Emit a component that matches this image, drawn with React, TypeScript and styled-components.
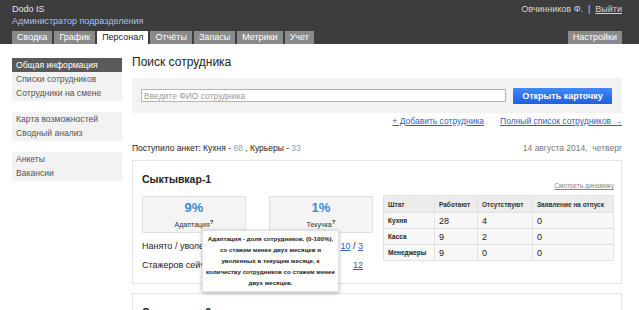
import React from "react";
import styled, { createGlobalStyle } from "styled-components";

const GlobalStyle = createGlobalStyle`
  html, body { margin: 0; padding: 0; background: #fff; }
  body {
    font-family: "Liberation Sans", Arial, Helvetica, sans-serif;
    color: #222;
    overflow: hidden;
    width: 639px;
    height: 310px;
  }
  * { box-sizing: border-box; }
`;

const Header = styled.header`
  background: #3d3d3d;
  height: 44px;
  padding: 3px 17px 0 12px;
  display: flex;
  flex-direction: column;
`;
const TopRow = styled.div`
  display: flex;
  justify-content: space-between;
  align-items: flex-start;
`;
const Brand = styled.div`
  font-size: 9px;
  line-height: 12px;
  color: #e2e2e2;
`;
const Role = styled.div`
  font-size: 9px;
  line-height: 12px;
  color: #a8c3ef;
`;
const User = styled.div`
  font-size: 9px;
  line-height: 12px;
  color: #d4d4d4;
`;
const Logout = styled.a`
  color: #d4d4d4;
  text-decoration: underline;
`;
const Sep = styled.span`
  margin: 0 5px;
`;
const TabsRow = styled.nav`
  display: flex;
  gap: 2px;
  margin-top: auto;
`;
const Tab = styled.div<{ $active?: boolean; $push?: boolean }>`
  height: 13px;
  line-height: 13px;
  padding: 0 5px;
  font-size: 9px;
  background: ${(p) => (p.$active ? "#fff" : "#8a8a8a")};
  color: ${(p) => (p.$active ? "#222" : "#fff")};
  margin-left: ${(p) => (p.$push ? "auto" : "0")};
`;

const Page = styled.div`
  display: flex;
  gap: 10px;
  padding: 14px 17px 0 12px;
`;
const Sidebar = styled.aside`
  width: 110px;
  flex: none;
  display: flex;
  flex-direction: column;
  gap: 11px;
`;
const NavGroup = styled.div`
  background: #f2f2f2;
  padding-bottom: 1px;
`;
const NavItem = styled.div<{ $active?: boolean }>`
  font-size: 8.6px;
  line-height: 14px;
  padding-left: 4px;
  color: ${(p) => (p.$active ? "#fff" : "#555")};
  background: ${(p) => (p.$active ? "#5a5a5a" : "transparent")};
`;

const Main = styled.main`
  flex: 1;
  min-width: 0;
`;
const Title = styled.h1`
  margin: -3px 0 8px;
  font-size: 12px;
  line-height: 15px;
  font-weight: normal;
  color: #222;
`;
const SearchBox = styled.div`
  height: 35px;
  background: #f2f2f2;
  display: flex;
  align-items: center;
  gap: 7px;
  padding: 0 10px 0 9px;
`;
const SearchInput = styled.input`
  flex: 1;
  height: 13px;
  border: 1px solid #b5b5b5;
  background: #fff;
  font-family: inherit;
  font-size: 8.5px;
  padding: 0 2px;
  outline: none;
  &::placeholder { color: #9a9a9a; }
`;
const OpenButton = styled.button`
  width: 99px;
  height: 16px;
  border: none;
  border-radius: 1px;
  background: linear-gradient(#4289f6, #1e5fe0);
  color: #fff;
  font-family: inherit;
  font-weight: bold;
  font-size: 9px;
  padding: 0;
`;
const LinksRow = styled.div`
  display: flex;
  justify-content: flex-end;
  gap: 16px;
  margin-top: 2px;
  font-size: 8.5px;
  line-height: 12px;
`;
const Link = styled.a`
  color: #2d63c4;
  text-decoration: underline;
`;
const InfoRow = styled.div`
  display: flex;
  justify-content: space-between;
  margin-top: 15px;
  font-size: 8.5px;
  line-height: 12px;
  color: #222;
`;
const Count = styled.span`
  color: #8fa0b6;
`;
const DateText = styled.span`
  color: #777;
`;

const Card = styled.section<{ $first?: boolean }>`
  margin-top: ${(p) => (p.$first ? "6px" : "9px")};
  border: 1px solid #e4e4e4;
  padding: 12px 8px 8px 9px;
`;
const CardGrid = styled.div`
  display: grid;
  grid-template-columns: 231px 1fr;
  gap: 10px;
`;
const CardTitle = styled.h2`
  margin: 0 0 10px;
  font-size: 10.5px;
  line-height: 13px;
  font-weight: bold;
  color: #222;
`;
const StatRow = styled.div`
  display: grid;
  grid-template-columns: 1fr 1fr;
  gap: 23px;
`;
const StatBox = styled.div`
  position: relative;
  height: 37px;
  background: #f4f4f4;
  border: 1px solid #e0e0e0;
  text-align: center;
  padding-top: 4px;
`;
const StatValue = styled.div`
  font-size: 13px;
  line-height: 14px;
  font-weight: bold;
  color: #3a8ad6;
`;
const StatLabel = styled.div`
  font-size: 7px;
  line-height: 10px;
  margin-top: 2px;
  color: #333;
`;
const Q = styled.sup`
  font-size: 6px;
  font-weight: bold;
  color: #222;
  vertical-align: 3px;
`;
const InfoLine = styled.div<{ $first?: boolean }>`
  display: flex;
  justify-content: space-between;
  padding-right: 10px;
  margin-top: ${(p) => (p.$first ? "4px" : "0")};
  font-size: 9px;
  line-height: 19px;
  color: #222;
`;
const ValueLink = styled.a`
  color: #2d63c4;
  text-decoration: underline;
`;
const Tooltip = styled.div`
  position: absolute;
  left: 59px;
  top: 33px;
  width: 137px;
  z-index: 5;
  background: #fff;
  border: 1px solid #e2e2e2;
  box-shadow: 0 1px 4px rgba(0, 0, 0, 0.3);
  padding: 2px 3px 3px;
  text-align: center;
  font-size: 6.2px;
  line-height: 11px;
  font-weight: bold;
  color: #222;
  white-space: nowrap;
`;

const RightCol = styled.div`
  padding-top: 8px;
`;
const DynLink = styled.a`
  display: block;
  text-align: right;
  font-size: 6.5px;
  line-height: 9px;
  color: #888;
  text-decoration: underline;
  margin-bottom: 5px;
`;
const Table = styled.table`
  width: 230px;
  border-collapse: collapse;
  table-layout: fixed;
`;
const Th = styled.th<{ $w: number }>`
  width: ${(p) => p.$w}px;
  height: 17px;
  padding: 0 4px;
  text-align: left;
  font-size: 6.5px;
  font-weight: bold;
  color: #333;
  background: #ececec;
  border: 1px solid #e2e2e2;
`;
const Td = styled.td<{ $head?: boolean }>`
  height: 16px;
  padding: 0 4px;
  font-size: ${(p) => (p.$head ? "6.5px" : "9px")};
  font-weight: ${(p) => (p.$head ? "bold" : "normal")};
  color: #222;
  background: #f8f8f8;
  border: 1px solid #e2e2e2;
`;

const tabs = ["Сводка", "График", "Персонал", "Отчёты", "Запасы", "Метрики", "Учет"];
const rows: [string, number, number, number][] = [
  ["Кухня", 28, 4, 0],
  ["Касса", 9, 2, 0],
  ["Менеджеры", 9, 0, 0],
];

export default function App() {
  return (
    <>
      <GlobalStyle />
      <Header>
        <TopRow>
          <div>
            <Brand>Dodo IS</Brand>
            <Role>Администратор подразделения</Role>
          </div>
          <User>
            Овчинников Ф.<Sep>|</Sep>
            <Logout>Выйти</Logout>
          </User>
        </TopRow>
        <TabsRow>
          {tabs.map((t) => (
            <Tab key={t} $active={t === "Персонал"}>
              {t}
            </Tab>
          ))}
          <Tab $push>Настройки</Tab>
        </TabsRow>
      </Header>
      <Page>
        <Sidebar>
          <NavGroup>
            <NavItem $active>Общая информация</NavItem>
            <NavItem>Списки сотрудников</NavItem>
            <NavItem>Сотрудники на смене</NavItem>
          </NavGroup>
          <NavGroup>
            <NavItem>Карта возможностей</NavItem>
            <NavItem>Сводный анализ</NavItem>
          </NavGroup>
          <NavGroup>
            <NavItem>Анкеты</NavItem>
            <NavItem>Вакансии</NavItem>
          </NavGroup>
        </Sidebar>
        <Main>
          <Title>Поиск сотрудника</Title>
          <SearchBox>
            <SearchInput placeholder="Введите ФИО сотрудника" />
            <OpenButton>Открыть карточку</OpenButton>
          </SearchBox>
          <LinksRow>
            <Link>+ Добавить сотрудника</Link>
            <Link>Полный список сотрудников →</Link>
          </LinksRow>
          <InfoRow>
            <span>
              Поступило анкет: Кухня - <Count>68</Count> , Курьеры - <Count>33</Count>
            </span>
            <DateText>14 августа 2014,&nbsp; четверг</DateText>
          </InfoRow>
          <Card $first>
            <CardGrid>
              <div>
                <CardTitle>Сыктывкар-1</CardTitle>
                <StatRow>
                  <StatBox>
                    <StatValue>9%</StatValue>
                    <StatLabel>
                      Адаптация<Q>?</Q>
                    </StatLabel>
                    <Tooltip>
                      Адаптация - доля сотрудников, (0-100%),
                      <br />
                      со стажем менее двух месяцев и
                      <br />
                      уволенных в текущем месяце, к
                      <br />
                      количеству сотрудников со стажем менее
                      <br />
                      двух месяцев.
                    </Tooltip>
                  </StatBox>
                  <StatBox>
                    <StatValue>1%</StatValue>
                    <StatLabel>
                      Текучка<Q>?</Q>
                    </StatLabel>
                  </StatBox>
                </StatRow>
                <InfoLine $first>
                  <span>Нанято / уволено в текущем месяце</span>
                  <span>
                    <ValueLink>10</ValueLink> / <ValueLink>3</ValueLink>
                  </span>
                </InfoLine>
                <InfoLine>
                  <span>Стажеров сейчас</span>
                  <ValueLink>12</ValueLink>
                </InfoLine>
              </div>
              <RightCol>
                <DynLink>Смотреть динамику</DynLink>
                <Table>
                  <thead>
                    <tr>
                      <Th $w={51}>Штат</Th>
                      <Th $w={43}>Работают</Th>
                      <Th $w={55}>Отсутствуют</Th>
                      <Th $w={81}>Заявление на отпуск</Th>
                    </tr>
                  </thead>
                  <tbody>
                    {rows.map((r) => (
                      <tr key={r[0]}>
                        <Td $head>{r[0]}</Td>
                        <Td>{r[1]}</Td>
                        <Td>{r[2]}</Td>
                        <Td>{r[3]}</Td>
                      </tr>
                    ))}
                  </tbody>
                </Table>
              </RightCol>
            </CardGrid>
          </Card>
          <Card>
            <CardTitle>Сыктывкар-2</CardTitle>
          </Card>
        </Main>
      </Page>
    </>
  );
}
